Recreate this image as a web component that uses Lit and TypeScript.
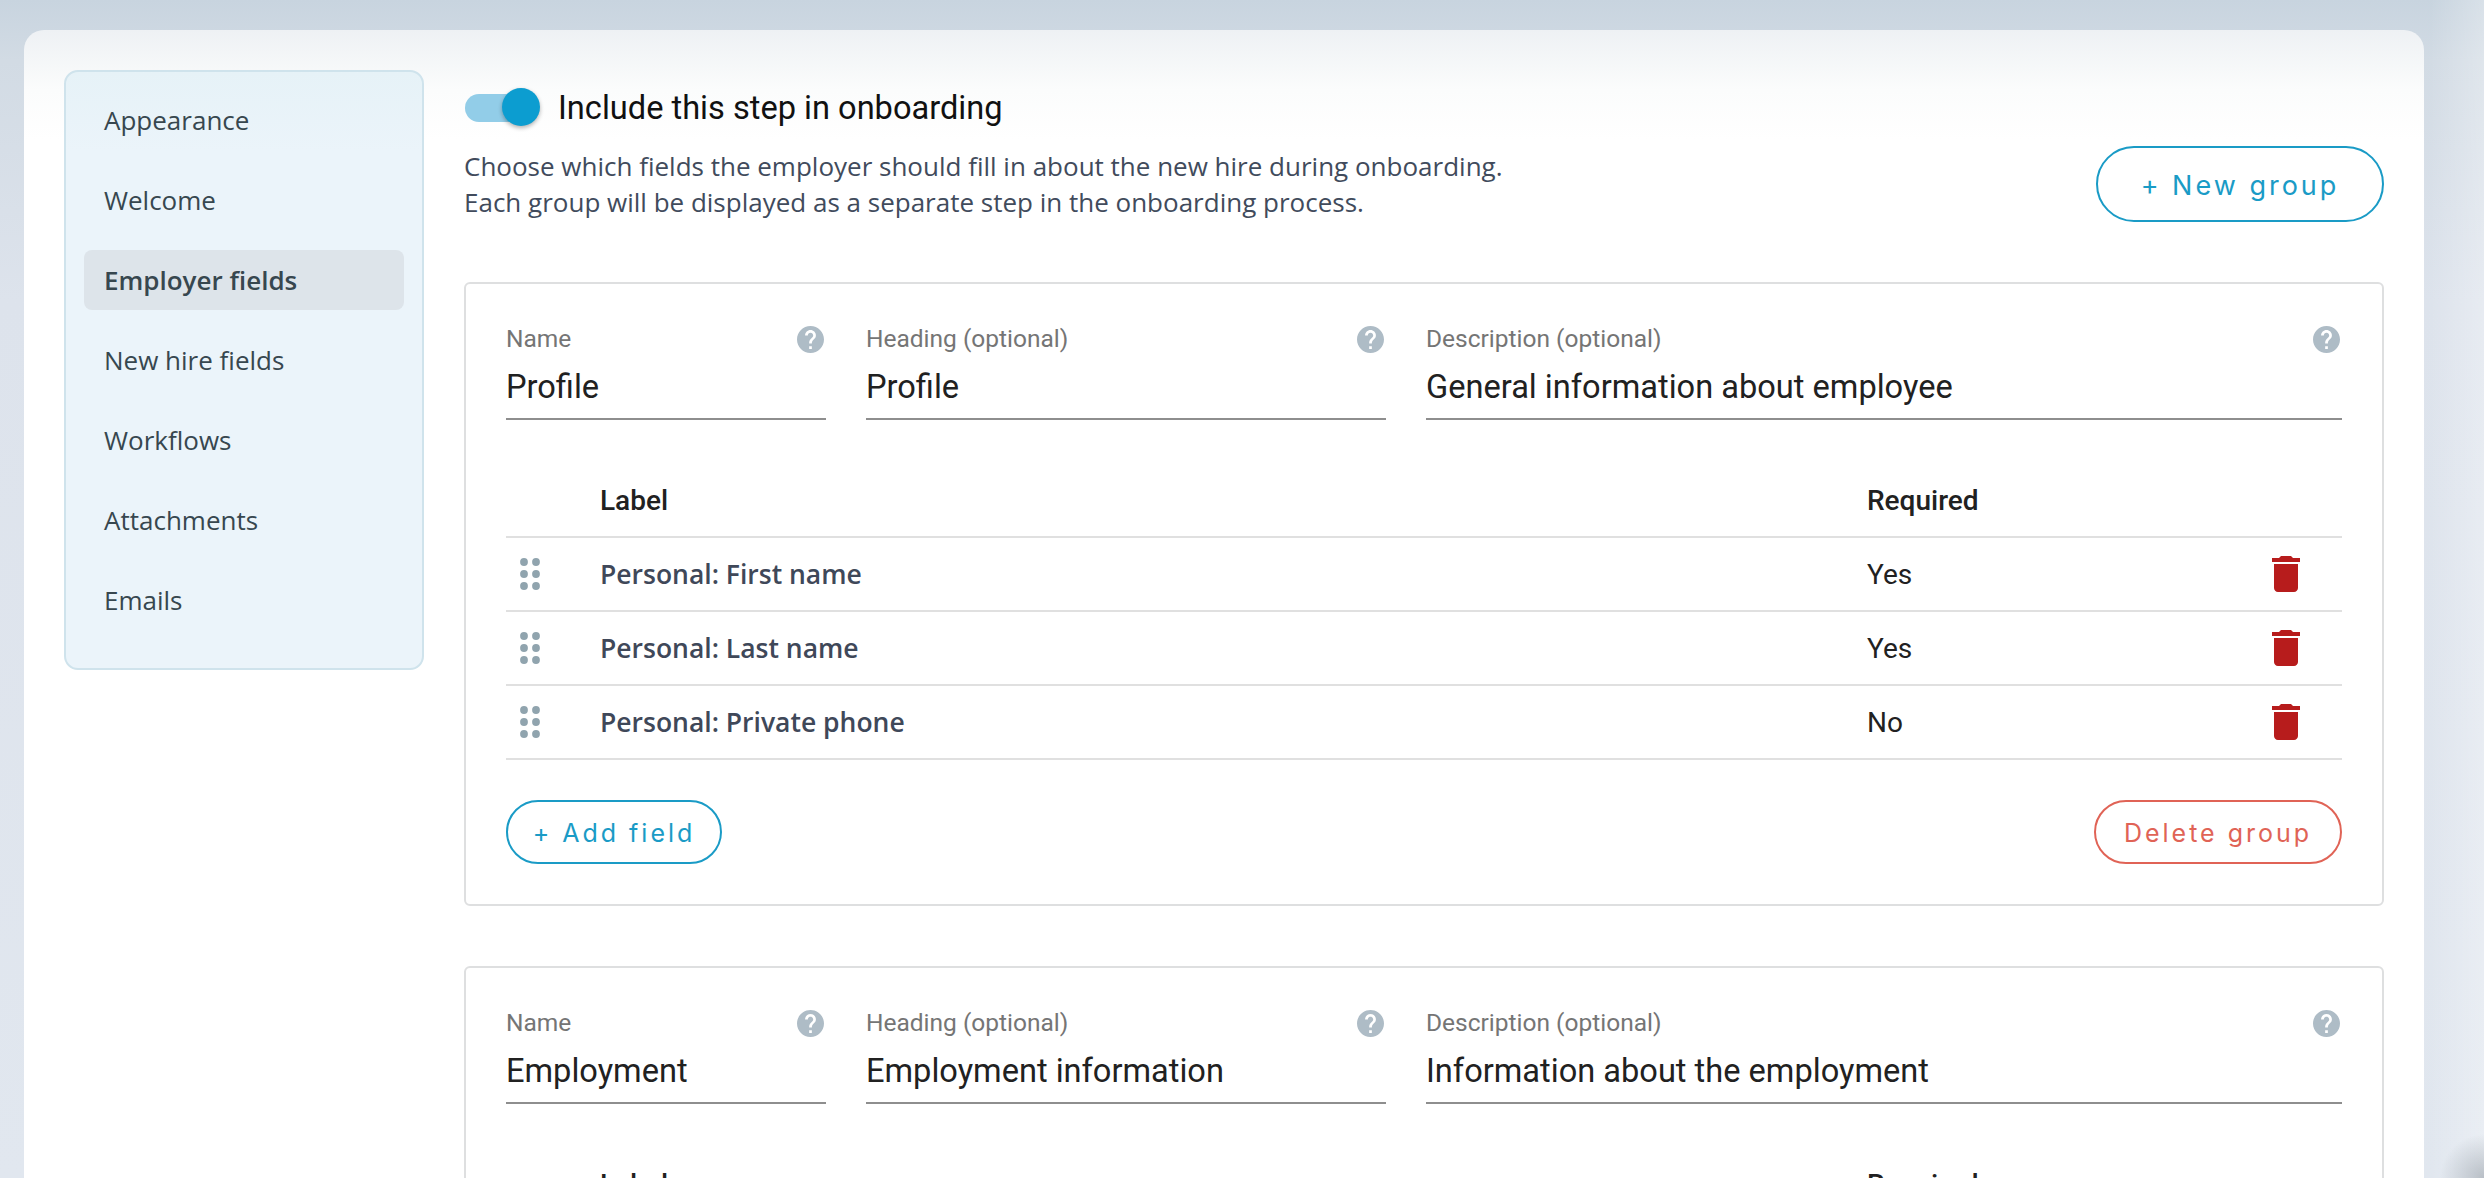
import { LitElement, html, css, svg } from "lit";
import { customElement } from "lit/decorators.js";

const helpIcon = html`<svg class="help" viewBox="2 2 20 20"><path d="M12 2C6.48 2 2 6.48 2 12s4.48 10 10 10 10-4.48 10-10S17.52 2 12 2zm1 17h-2v-2h2v2zm2.07-7.75l-.9.92C13.45 12.9 13 13.5 13 15h-2v-.5c0-1.1.45-2.1 1.17-2.83l1.24-1.26c.37-.36.59-.86.59-1.41 0-1.1-.9-2-2-2s-2 .9-2 2H8c0-2.21 1.79-4 4-4s4 1.79 4 4c0 .88-.36 1.68-.93 2.25z"/></svg>`;
const trashIcon = html`<svg class="trash" viewBox="5 3 14 18"><path d="M6 19c0 1.1.9 2 2 2h8c1.1 0 2-.9 2-2V7H6v12zM19 4h-3.5l-1-1h-5l-1 1H5v2h14V4z"/></svg>`;
const dots = [4, 16].flatMap((x) => [4, 16, 28].map((y) => svg`<circle cx=${x} cy=${y} r="3.9"/>`));
const dragIcon = html`<svg class="drag" viewBox="0 0 20 32">${dots}</svg>`;

const nav = ["Appearance", "Welcome", "Employer fields", "New hire fields", "Workflows", "Attachments", "Emails"];

interface Group {
  name: string;
  heading: string;
  description: string;
  rows: [string, string][];
  footer: boolean;
}

const groups: Group[] = [
  {
    name: "Profile",
    heading: "Profile",
    description: "General information about employee",
    rows: [
      ["Personal: First name", "Yes"],
      ["Personal: Last name", "Yes"],
      ["Personal: Private phone", "No"],
    ],
    footer: true,
  },
  {
    name: "Employment",
    heading: "Employment information",
    description: "Information about the employment",
    rows: [],
    footer: false,
  },
];

@customElement("app-root")
export class AppRoot extends LitElement {
  static styles = css`
    :host {
      display: block;
      height: 1178px;
      overflow: hidden;
      box-sizing: border-box;
      padding: 30px 60px 0 24px;
      background:
        radial-gradient(circle at 100% 1178px, rgba(110, 120, 130, 0.4), rgba(110, 120, 130, 0) 44px),
        linear-gradient(to right, rgba(255, 255, 255, 0) 2430px, rgba(255, 255, 255, 0.3) 100%),
        linear-gradient(to bottom, #c8d4df 0, #d2dbe4 60px, #dde3ec 300px, #e1e7ef 100%);
      font-family: "Roboto", sans-serif;
    }
    .panel {
      display: flex;
      gap: 40px;
      height: 1200px;
      box-sizing: border-box;
      padding: 40px 40px 0;
      border-radius: 20px 20px 0 0;
      background: linear-gradient(to bottom, #eef1f4 0, #fbfcfc 60px, #ffffff 110px);
    }
    .side {
      flex: none;
      box-sizing: border-box;
      width: 360px;
      height: 600px;
      padding: 18px 18px 36px;
      display: flex;
      flex-direction: column;
      gap: 20px;
      border: 2px solid #cfe3ec;
      border-radius: 14px;
      background: linear-gradient(to bottom, #e6f2f7 0, #ebf4fa 80px);
    }
    .nav {
      height: 60px;
      display: flex;
      align-items: center;
      padding: 0 20px;
      border-radius: 8px;
      font: 400 26px "Open Sans", sans-serif;
      color: #37474f;
    }
    .nav.on {
      background: #dde4ea;
      font-weight: 600;
    }
    .main {
      flex: 1;
      min-width: 0;
    }
    .top {
      display: flex;
      justify-content: space-between;
      align-items: flex-end;
      padding-top: 18px;
    }
    .toggle-row {
      display: flex;
      align-items: center;
      height: 40px;
      gap: 18px;
    }
    .switch {
      position: relative;
      width: 76px;
      height: 40px;
    }
    .track {
      display: block;
      margin: 6px 0 0 1px;
      width: 65px;
      height: 28px;
      border-radius: 14px;
      background: #92cde8;
    }
    .thumb {
      position: absolute;
      right: 0;
      top: 0;
      width: 38px;
      height: 38px;
      border-radius: 50%;
      background: #0c9dd0;
      box-shadow: 0 2px 4px rgba(0, 0, 0, 0.3);
    }
    .toggle-label {
      font-size: 32.6px;
      line-height: 38px;
      color: #111;
    }
    .desc {
      margin-top: 20px;
      margin-bottom: 2px;
      font: 400 26px/36px "Open Sans", sans-serif;
      color: #414b5c;
    }
    .btn {
      box-sizing: border-box;
      display: flex;
      align-items: center;
      justify-content: center;
      border-radius: 40px;
      border: 2px solid #1a9bc6;
      color: #1a9bc6;
      font-family: "Inter", sans-serif;
      font-weight: 400;
      background: #fff;
      padding-top: 2px;
    }
    .btn.big {
      width: 288px;
      height: 76px;
      font-size: 27px;
      letter-spacing: 3px;
    }
    .btn.small {
      height: 64px;
      font-size: 25px;
      letter-spacing: 3px;
    }
    .btn.add {
      width: 216px;
    }
    .btn.del {
      width: 248px;
      border-color: #e06356;
      color: #e06356;
    }
    .group {
      margin-top: 60px;
      padding: 40px;
      border: 2px solid #dedfe0;
      border-radius: 6px;
      background: #fff;
    }
    .fields {
      display: grid;
      grid-template-columns: 320px 520px 1fr;
      gap: 40px;
    }
    .label-row {
      display: flex;
      justify-content: space-between;
      align-items: center;
      height: 30px;
      font-size: 24.5px;
      line-height: 28px;
      color: #757575;
    }
    .help {
      width: 27px;
      height: 27px;
      margin-right: 2px;
      fill: #aebcc6;
    }
    .value {
      box-sizing: border-box;
      height: 66px;
      padding-top: 2px;
      display: flex;
      align-items: center;
      border-bottom: 2px solid #8e8e8e;
      font-size: 32.6px;
      color: #212121;
    }
    .table {
      margin-top: 44px;
    }
    .row {
      display: grid;
      grid-template-columns: 94px 1267px 1fr;
      align-items: center;
      height: 74px;
      box-sizing: border-box;
      border-bottom: 2px solid #e0e0e0;
    }
    .head {
      font-size: 28px;
      font-weight: 500;
      color: #212121;
    }
    .field-name {
      font: 600 26.5px "Open Sans", sans-serif;
      color: #3f4859;
    }
    .req {
      font-size: 28px;
      color: #212121;
      display: flex;
      justify-content: space-between;
      align-items: center;
    }
    .drag {
      width: 20px;
      height: 32px;
      margin-left: 14px;
      fill: #90a4ae;
    }
    .trash {
      width: 28px;
      height: 36px;
      margin-right: 42px;
      fill: #b71c1c;
    }
    .foot {
      display: flex;
      justify-content: space-between;
      margin-top: 40px;
    }
  `;

  private renderGroup(g: Group) {
    return html`
      <section class="group">
        <div class="fields">
          ${[["Name", g.name], ["Heading (optional)", g.heading], ["Description (optional)", g.description]].map(
            ([l, v]) => html`<div>
              <div class="label-row"><span>${l}</span>${helpIcon}</div>
              <div class="value">${v}</div>
            </div>`
          )}
        </div>
        <div class="table">
          <div class="row head"><span></span><span>Label</span><span>Required</span></div>
          ${g.rows.map(
            ([n, r]) => html`<div class="row">
              ${dragIcon}
              <span class="field-name">${n}</span>
              <span class="req"><span>${r}</span>${trashIcon}</span>
            </div>`
          )}
        </div>
        ${g.footer
          ? html`<div class="foot">
              <div class="btn small add">+ Add field</div>
              <div class="btn small del">Delete group</div>
            </div>`
          : ""}
      </section>
    `;
  }

  render() {
    return html`
      <div class="panel">
        <nav class="side">
          ${nav.map((n) => html`<div class="nav ${n === "Employer fields" ? "on" : ""}">${n}</div>`)}
        </nav>
        <div class="main">
          <div class="top">
            <div>
              <div class="toggle-row">
                <div class="switch"><span class="track"></span><span class="thumb"></span></div>
                <span class="toggle-label">Include this step in onboarding</span>
              </div>
              <div class="desc">
                Choose which fields the employer should fill in about the new hire during onboarding.<br />
                Each group will be displayed as a separate step in the onboarding process.
              </div>
            </div>
            <div class="btn big">+ New group</div>
          </div>
          ${groups.map((g) => this.renderGroup(g))}
        </div>
      </div>
    `;
  }
}
